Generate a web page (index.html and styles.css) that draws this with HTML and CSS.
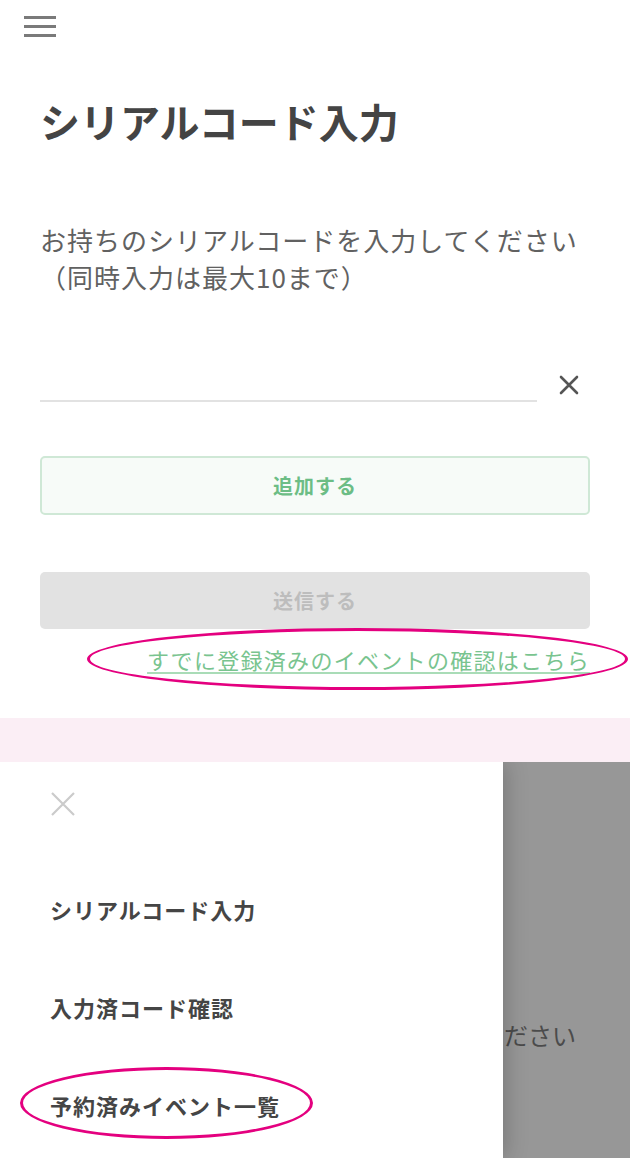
FILE: index.html
```html
<!DOCTYPE html>
<html lang="ja">
<head>
<meta charset="UTF-8" />
<meta name="viewport" content="width=device-width, initial-scale=1" />
<title>シリアルコード入力</title>
<link rel="stylesheet" href="styles.css">
</head>
<body>

  <!-- 入力画面 -->
  <section class="screen screen-input">
    <header class="topbar">
      <button class="menu-btn" aria-label="メニュー">
        <svg width="32" height="21" viewBox="0 0 32 21">
          <rect x="0" y="0" width="32" height="3" fill="#7a7a7a"/>
          <rect x="0" y="9" width="32" height="3" fill="#7a7a7a"/>
          <rect x="0" y="18" width="32" height="3" fill="#7a7a7a"/>
        </svg>
      </button>
    </header>

    <main class="content">
      <h1 class="page-title">シリアルコード入力</h1>
      <p class="lead">お持ちのシリアルコードを入力してください<br>（同時入力は最大10まで）</p>

      <div class="field-row">
        <input class="code-input" type="text" aria-label="シリアルコード">
        <button class="clear-btn" aria-label="クリア">
          <svg width="22" height="22" viewBox="0 0 22 22">
            <path d="M3 3 L19 19 M19 3 L3 19" stroke="#555" stroke-width="2.6" stroke-linecap="round"/>
          </svg>
        </button>
      </div>

      <button class="btn btn-add">追加する</button>
      <button class="btn btn-send" disabled>送信する</button>

      <p class="link-row"><a href="#" class="event-link">すでに登録済みのイベントの確認はこちら</a></p>
    </main>

    <span class="mark mark-link"></span>
  </section>

  <div class="band"></div>

  <!-- メニュー展開時 -->
  <section class="screen screen-menu">
    <nav class="drawer">
      <button class="close-btn" aria-label="閉じる">
        <svg width="26" height="26" viewBox="0 0 26 26">
          <path d="M2 2 L24 24 M24 2 L2 24" stroke="#cbcbcb" stroke-width="2.2"/>
        </svg>
      </button>
      <ul class="menu-list">
        <li><a href="#">シリアルコード入力</a></li>
        <li><a href="#">入力済コード確認</a></li>
        <li><a href="#">予約済みイベント一覧</a></li>
      </ul>
    </nav>
    <div class="backdrop">
      <p class="behind-text">ださい</p>
    </div>

    <span class="mark mark-menu"></span>
  </section>

</body>
</html>
```

FILE: styles.css
```css
body {
  margin: 0;
  font-family: "Noto Sans CJK JP", "Noto Sans", sans-serif;
  color: #444;
  background: #fff;
}

button {
  font-family: inherit;
  background: none;
  border: none;
  padding: 0;
  cursor: pointer;
}

.screen {
  position: relative;
}

/* 入力画面 */
.screen-input {
  height: 718px;
}
.topbar {
  height: 54px;
  padding: 16px 0 0 24px;
  box-sizing: border-box;
}
.menu-btn svg {
  display: block;
}

.content {
  padding: 0 40px;
}
.page-title {
  margin: 39px 0 0;
  font-size: 40px;
  line-height: 56px;
  font-weight: 700;
  color: #444;
}
.lead {
  margin: 72px 0 0;
  font-size: 26px;
  line-height: 37px;
  letter-spacing: 1px;
  color: #616161;
}

.field-row {
  display: flex;
  align-items: flex-end;
  margin-top: 57px;
}
.code-input {
  width: 497px;
  height: 48px;
  border: none;
  border-bottom: 2px solid #e2e2e2;
  outline: none;
  font-size: 22px;
  font-family: inherit;
  padding: 0;
}
.clear-btn {
  margin: 0 0 6px 21px;
}
.clear-btn svg {
  display: block;
}

.btn {
  display: block;
  width: 100%;
  border-radius: 5px;
  font-size: 20px;
  font-weight: 700;
  letter-spacing: 1px;
}
.btn-add {
  margin-top: 54px;
  height: 59px;
  border: 2px solid #cfe8d6;
  background: #f7fbf8;
  color: #6cbd85;
}
.btn-send {
  margin-top: 57px;
  height: 57px;
  background: #e2e2e2;
  color: #bdbdbd;
  cursor: default;
}

.link-row {
  margin: 15px 0 0;
  text-align: right;
  font-size: 22px;
  line-height: 30px;
  letter-spacing: 1.3px;
}
.event-link {
  color: #79c48f;
  text-decoration: underline;
  text-decoration-color: #a9dcb7;
  text-underline-offset: 3px;
}

/* 区切り帯 */
.band {
  height: 44px;
  background: #fbeef5;
}

/* メニュー展開時 */
.screen-menu {
  display: flex;
  height: 396px;
  overflow: hidden;
}
.drawer {
  position: relative;
  z-index: 1;
  width: 503px;
  padding: 29px 0 0 50px;
  box-sizing: border-box;
  background: #fff;
  box-shadow: 2px 0 22px rgba(0, 0, 0, 0.22);
}
.close-btn svg {
  display: block;
}
.menu-list {
  list-style: none;
  margin: 38px 0 0;
  padding: 0;
}
.menu-list li {
  padding: 34px 0;
  font-size: 22px;
  line-height: 30px;
}
.menu-list a {
  font-weight: 700;
  letter-spacing: 1px;
  color: #454545;
  text-decoration: none;
}

.backdrop {
  flex: 1;
  background: #979797;
  overflow: hidden;
}
.behind-text {
  margin: 258px 0 0 1px;
  font-size: 24px;
  line-height: 30px;
  white-space: nowrap;
  color: #4b4b4b;
}

/* 赤丸の注記 */
.mark {
  position: absolute;
  z-index: 2;
  border: 3px solid #e4007f;
  border-radius: 50%;
  box-sizing: border-box;
  pointer-events: none;
}
.mark-link {
  left: 87px;
  top: 628px;
  width: 541px;
  height: 62px;
}
.mark-menu {
  left: 20px;
  top: 305px;
  width: 293px;
  height: 72px;
}
```
